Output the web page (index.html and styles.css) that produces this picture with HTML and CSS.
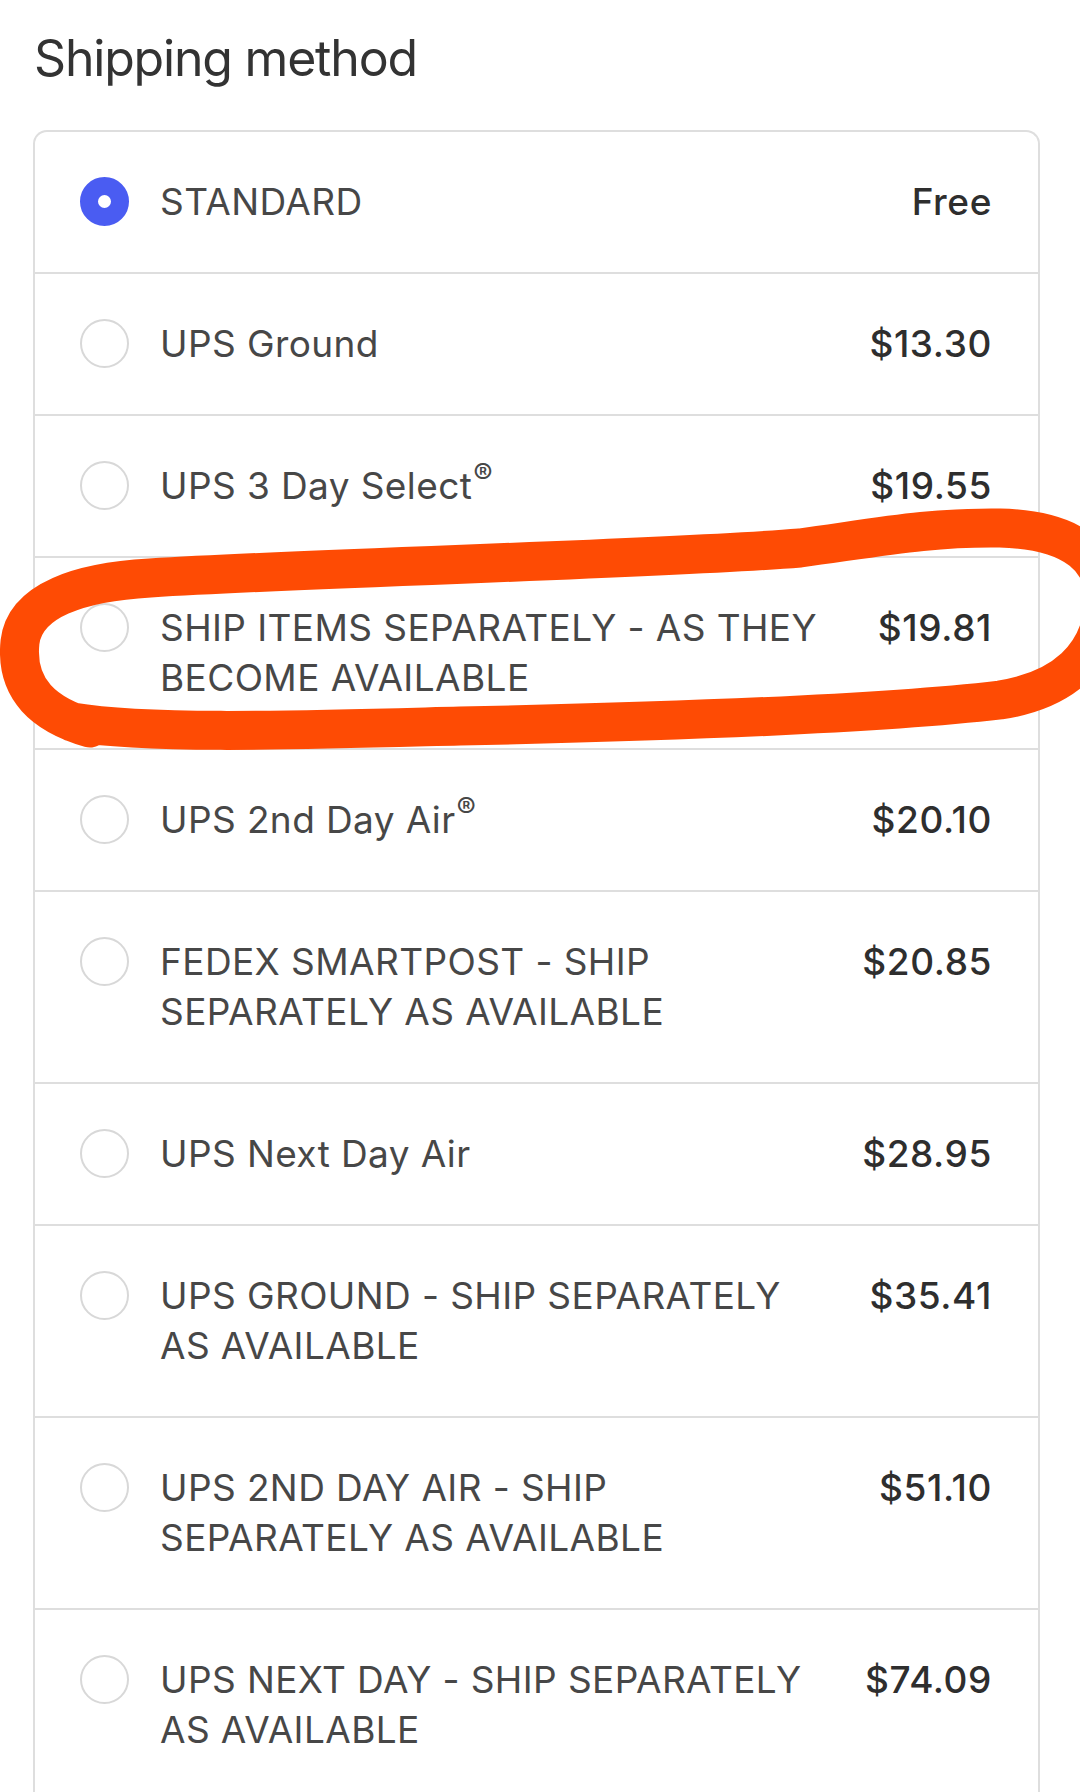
FILE: index.html
```html
<!DOCTYPE html>
<html>
<head>
<meta charset="utf-8">
<link rel="stylesheet" href="styles.css">
</head>
<body>
<div class="page">
  <h1 class="title">Shipping method</h1>
  <div class="methods">
    <div class="row">
      <span class="radio checked"></span>
      <span class="label">STANDARD</span>
      <span class="price">Free</span>
    </div>
    <div class="row">
      <span class="radio"></span>
      <span class="label">UPS Ground</span>
      <span class="price">$13.30</span>
    </div>
    <div class="row">
      <span class="radio"></span>
      <span class="label">UPS 3 Day Select<sup class="reg">®</sup></span>
      <span class="price">$19.55</span>
    </div>
    <div class="row">
      <span class="radio"></span>
      <span class="label">SHIP ITEMS SEPARATELY - AS THEY BECOME AVAILABLE</span>
      <span class="price">$19.81</span>
    </div>
    <div class="row">
      <span class="radio"></span>
      <span class="label">UPS 2nd Day Air<sup class="reg">®</sup></span>
      <span class="price">$20.10</span>
    </div>
    <div class="row">
      <span class="radio"></span>
      <span class="label">FEDEX SMARTPOST - SHIP SEPARATELY AS AVAILABLE</span>
      <span class="price">$20.85</span>
    </div>
    <div class="row">
      <span class="radio"></span>
      <span class="label">UPS Next Day Air</span>
      <span class="price">$28.95</span>
    </div>
    <div class="row">
      <span class="radio"></span>
      <span class="label">UPS GROUND - SHIP SEPARATELY AS AVAILABLE</span>
      <span class="price">$35.41</span>
    </div>
    <div class="row">
      <span class="radio"></span>
      <span class="label">UPS 2ND DAY AIR - SHIP SEPARATELY AS AVAILABLE</span>
      <span class="price">$51.10</span>
    </div>
    <div class="row">
      <span class="radio"></span>
      <span class="label">UPS NEXT DAY - SHIP SEPARATELY AS AVAILABLE</span>
      <span class="price">$74.09</span>
    </div>
  </div>
  <svg class="markup" viewBox="0 0 1080 1792" width="1080" height="1792" aria-hidden="true">
    <path d="M 72 722 C 150 735, 300 730, 460 726 C 650 722, 880 714, 1000 700 C 1065 690, 1100 655, 1104 605 C 1108 560, 1075 530, 1000 528 C 930 527, 880 537, 800 548 C 650 560, 350 566, 150 578 C 80 582, 25 600, 20 642 C 15 690, 45 715, 90 728" fill="none" stroke="#fe4b04" stroke-width="39" stroke-linecap="round" stroke-linejoin="round"/>
  </svg>
</div>
</body>
</html>
```

FILE: styles.css
```css
html, body {
  margin: 0;
  padding: 0;
  background: #ffffff;
}

.page {
  position: relative;
  width: 1080px;
  height: 1792px;
  overflow: hidden;
  font-family: Inter, "Noto Sans", "Liberation Sans", sans-serif;
}

.title {
  margin: 0;
  padding: 28px 0 0 34px;
  font-size: 50px;
  line-height: 60px;
  font-weight: 400;
  letter-spacing: -1.2px;
  color: #333333;
}

.methods {
  margin: 42px 0 0 33px;
  width: 1007px;
  border: 2px solid #dedede;
  border-bottom: none;
  border-radius: 14px 14px 0 0;
  box-sizing: border-box;
}

.row {
  display: flex;
  align-items: flex-start;
  padding: 45px 46px 45px 45px;
  border-top: 2px solid #dedede;
}

.row:first-child {
  border-top: none;
}

.radio {
  flex: 0 0 auto;
  width: 49px;
  height: 49px;
  box-sizing: border-box;
  border: 2px solid #d8d8d8;
  border-radius: 50%;
  margin-top: 0;
  margin-right: 31px;
  background: #ffffff;
}

.radio.checked {
  border: 18px solid #4a5cf2;
  background: #ffffff;
}

.label {
  flex: 1 1 auto;
  font-size: 37px;
  line-height: 50px;
  letter-spacing: 0.4px;
  color: #474747;
  font-weight: 400;
}

.reg {
  font-size: 29px;
  line-height: 0;
  vertical-align: 15px;
  margin-left: 1px;
  letter-spacing: 0;
}

.price {
  flex: 0 0 160px;
  text-align: right;
  font-size: 37px;
  line-height: 50px;
  letter-spacing: 0.6px;
  color: #2e2e2e;
  font-weight: 500;
}

.markup {
  position: absolute;
  left: 0;
  top: 0;
  pointer-events: none;
}
```
